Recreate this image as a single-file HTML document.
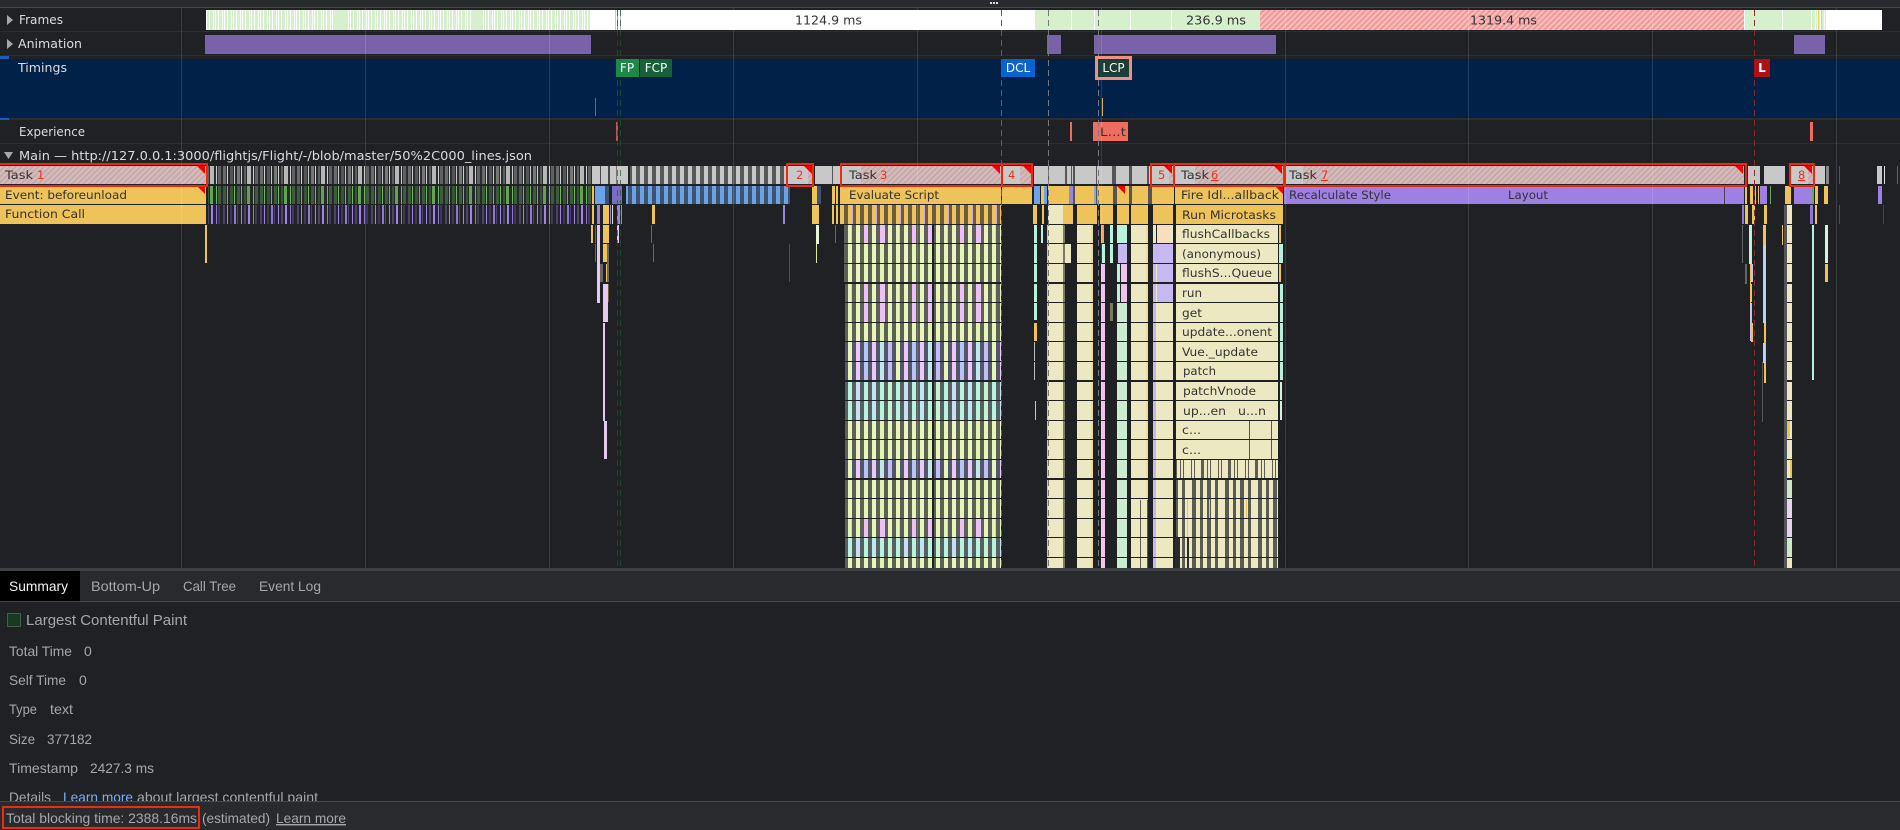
<!DOCTYPE html>
<html><head><meta charset="utf-8"><style>
html,body{margin:0;padding:0;background:#202124;width:1900px;height:830px;overflow:hidden}
svg{position:absolute;left:0;top:0;display:block}
.c{font-family:"DejaVu Sans",sans-serif;font-size:11.5px;fill:#333}
.l{font-family:"DejaVu Sans",sans-serif;font-size:12px;fill:#dcdcdc}
.w{font-family:"DejaVu Sans",sans-serif;font-size:12px;fill:#fff;font-weight:400}
.r{fill:#f0321a}
.b{font-family:"Liberation Sans",sans-serif;font-size:14px;fill:#a6a7a9}
</style></head><body>
<svg width="1900" height="830" viewBox="0 0 1900 830" xmlns="http://www.w3.org/2000/svg">
<defs>
<pattern id="ht" width="4" height="4" patternUnits="userSpaceOnUse" patternTransform="rotate(-45)"><rect width="4" height="4" fill="#d3bcbc"/><rect width="4" height="2" fill="#c9a9a9"/></pattern>
<pattern id="hf" width="4" height="4" patternUnits="userSpaceOnUse" patternTransform="rotate(-45)"><rect width="4" height="4" fill="#f9bcbc"/><rect width="4" height="2" fill="#ef9a9a"/></pattern>
<pattern id="fg" width="9" height="20" patternUnits="userSpaceOnUse"><rect width="9" height="20" fill="#d6efcd"/><rect x="2" width="1" height="20" fill="#fff"/><rect x="6" width="1" height="20" fill="#f4fbf1"/><rect x="8" width="1" height="20" fill="#fff"/></pattern>
<pattern id="t1" width="37" height="19" patternUnits="userSpaceOnUse"><rect width="37" height="19" fill="#2b2c2f"/><rect x="1" width="3" height="19" fill="#6a6b6d"/><rect x="5" width="1" height="19" fill="#d0d0d0"/><rect x="8" width="3" height="19" fill="#555658"/><rect x="12" width="1" height="19" fill="#c8c8c8"/><rect x="15" width="3" height="19" fill="#777"/><rect x="19" width="1" height="19" fill="#d0d0d0"/><rect x="22" width="2" height="19" fill="#5d5e60"/><rect x="25" width="4" height="19" fill="#b8b8b8"/><rect x="31" width="1" height="19" fill="#d0d0d0"/><rect x="33" width="3" height="19" fill="#606163"/></pattern>
<pattern id="t2" width="8" height="19" patternUnits="userSpaceOnUse"><rect width="8" height="19" fill="#57585a"/><rect width="4" height="19" fill="#c8c8c8"/></pattern>
<pattern id="e1" width="37" height="19" patternUnits="userSpaceOnUse"><rect width="37" height="19" fill="#24292a"/><rect x="1" width="3" height="19" fill="#3f5a3e"/><rect x="5" width="1" height="19" fill="#6fb85e"/><rect x="8" width="3" height="19" fill="#3a5238"/><rect x="12" width="1" height="19" fill="#6fb85e"/><rect x="15" width="3" height="19" fill="#3f5a3e"/><rect x="19" width="1" height="19" fill="#6fb85e"/><rect x="22" width="2" height="19" fill="#3a5238"/><rect x="25" width="3" height="19" fill="#63a353"/><rect x="31" width="1" height="19" fill="#6fb85e"/><rect x="33" width="3" height="19" fill="#3f5a3e"/></pattern>
<pattern id="e2" width="8" height="19" patternUnits="userSpaceOnUse"><rect width="8" height="19" fill="#3d5370"/><rect width="4" height="19" fill="#6ca2e6"/></pattern>
<pattern id="f1" width="37" height="19" patternUnits="userSpaceOnUse"><rect width="37" height="19" fill="#232329"/><rect x="1" width="2" height="19" fill="#4a4468"/><rect x="5" width="1" height="19" fill="#9d84e6"/><rect x="8" width="2" height="19" fill="#3e3a55"/><rect x="12" width="2" height="19" fill="#8f77d6"/><rect x="15" width="1" height="19" fill="#4a4468"/><rect x="19" width="1" height="19" fill="#9d84e6"/><rect x="22" width="2" height="19" fill="#4a4468"/><rect x="26" width="2" height="19" fill="#9d84e6"/><rect x="31" width="1" height="19" fill="#8f77d6"/><rect x="33" width="2" height="19" fill="#3e3a55"/></pattern>
<pattern id="y1" width="24" height="19" patternUnits="userSpaceOnUse"><rect width="24" height="19" fill="#6b5c3d"/><rect width="4" height="19" fill="#edc35a"/><rect x="8" width="4" height="19" fill="#edc35a"/><rect x="16" width="4" height="19" fill="#edc35a"/><rect x="12" width="1" height="19" fill="#d8a8d0"/></pattern>
<pattern id="pP" width="48" height="19" patternUnits="userSpaceOnUse"><rect width="48" height="19" fill="#5c6058"/><rect width="4" height="19" fill="#ebc0f7"/><rect x="8" width="4" height="19" fill="#e6f5b5"/><rect x="16" width="5" height="19" fill="#ebc0f7"/><rect x="24" width="4" height="19" fill="#e6f5b5"/><rect x="32" width="4" height="19" fill="#e6f5b5"/><rect x="35" width="1" height="19" fill="#ebc0f7"/><rect x="40" width="4" height="19" fill="#e6f5b5"/></pattern>
<pattern id="pL" width="48" height="19" patternUnits="userSpaceOnUse"><rect width="48" height="19" fill="#5c6156"/><rect width="4" height="19" fill="#e6f5b5"/><rect x="8" width="4" height="19" fill="#e8f6ba"/><rect x="16" width="4" height="19" fill="#e2f3b0"/><rect x="24" width="4" height="19" fill="#e6f5b5"/><rect x="32" width="4" height="19" fill="#e6f5b5"/><rect x="40" width="4" height="19" fill="#ecf2c0"/></pattern>
<pattern id="pM" width="48" height="19" patternUnits="userSpaceOnUse"><rect width="48" height="19" fill="#566060"/><rect width="4" height="19" fill="#b8f4dd"/><rect x="8" width="4" height="19" fill="#bde8f2"/><rect x="16" width="4" height="19" fill="#b8f4dd"/><rect x="24" width="4" height="19" fill="#c6f3d2"/><rect x="32" width="4" height="19" fill="#b8f4dd"/><rect x="40" width="4" height="19" fill="#c9ddf6"/></pattern>
<pattern id="pB" width="48" height="19" patternUnits="userSpaceOnUse"><rect width="48" height="19" fill="#53566a"/><rect width="4" height="19" fill="#b5c6f5"/><rect x="8" width="4" height="19" fill="#ebc8f5"/><rect x="16" width="4" height="19" fill="#bfe8e8"/><rect x="24" width="4" height="19" fill="#c2bdf5"/><rect x="32" width="4" height="19" fill="#e6f5b5"/><rect x="40" width="4" height="19" fill="#ebc8f5"/></pattern>
<pattern id="pS" width="33" height="19" patternUnits="userSpaceOnUse"><rect width="33" height="19" fill="#ece8c2"/><rect x="4" width="4" height="19" fill="#5a5c50"/><rect x="12" width="3" height="19" fill="#5a5c50"/><rect x="19" width="4" height="19" fill="#5a5c50"/><rect x="27" width="3" height="19" fill="#5a5c50"/></pattern>
<pattern id="pS2" width="27" height="19" patternUnits="userSpaceOnUse"><rect width="27" height="19" fill="#ece8c2"/><rect x="3" width="1" height="19" fill="#5d5d50"/><rect x="6" width="1" height="19" fill="#5d5d50"/><rect x="13" width="3" height="19" fill="#5d5d50"/><rect x="19" width="1" height="19" fill="#5d5d50"/><rect x="22" width="1" height="19" fill="#5d5d50"/></pattern>
</defs>

<g shape-rendering="crispEdges">
<!-- top bar -->
<rect width="1900" height="7" fill="#292a2d"/><rect y="7" width="1900" height="1" fill="#47484c"/>
<rect x="990" y="2" width="2" height="2" fill="#ddd"/><rect x="993" y="2" width="2" height="2" fill="#ddd"/><rect x="996" y="2" width="2" height="2" fill="#ddd"/>

<!-- frames -->
<rect x="206" y="10" width="384" height="20" fill="url(#fg)"/>
<rect x="335" y="10" width="10" height="20" fill="#d6efcd"/><rect x="473" y="10" width="10" height="20" fill="#d6efcd"/>
<rect x="590" y="10" width="445" height="20" fill="#fff"/>
<rect x="615" y="10" width="1" height="20" fill="#e8d64a"/><rect x="617" y="10" width="1" height="20" fill="#999"/><rect x="620" y="10" width="1" height="20" fill="#bbb"/>
<rect x="1035" y="10" width="225" height="20" fill="#d6efcd"/>
<rect x="1071" y="10" width="1" height="20" fill="#fff"/><rect x="1094" y="10" width="1" height="20" fill="#fff"/><rect x="1130" y="10" width="1" height="20" fill="#fff"/><rect x="1171" y="10" width="1" height="20" fill="#fff"/>
<rect x="1260" y="10" width="484" height="20" fill="url(#hf)"/><rect x="1744" y="10" width="1" height="20" fill="#fff"/>
<rect x="1745" y="10" width="65" height="20" fill="#d6efcd"/><rect x="1782" y="10" width="1" height="20" fill="#fff"/>
<rect x="1810" y="10" width="16" height="20" fill="url(#fg)"/><rect x="1818" y="10" width="1" height="20" fill="#e8d64a"/><rect x="1821" y="10" width="1" height="20" fill="#e8d64a"/>
<rect x="1826" y="10" width="56" height="20" fill="#fff"/>
<rect y="31" width="1900" height="1" fill="#2c2d30"/>

<!-- animation -->
<rect x="205" y="35" width="386" height="19" fill="#7862a9"/>
<rect x="1047" y="35" width="14" height="19" fill="#7862a9"/>
<rect x="1094" y="35" width="182" height="19" fill="#7862a9"/>
<rect x="1794" y="35" width="31" height="19" fill="#7862a9"/>
<rect y="55" width="1900" height="1" fill="#2c2d30"/>

<!-- timings -->
<rect y="59" width="1900" height="59" fill="#012148"/>
<rect y="56" width="9" height="3" fill="#1a5fb4"/><rect y="118" width="9" height="2" fill="#1a5fb4"/>
<rect x="9" y="118" width="1891" height="2" fill="#2c2d30"/>
<rect x="595" y="98" width="1" height="18" fill="#5c6b80"/><rect x="1102" y="98" width="1" height="18" fill="#d8b24a"/>

<!-- experience -->
<rect x="616" y="122" width="2" height="19" fill="#bb5a50"/>
<rect x="1070" y="122" width="2" height="19" fill="#ef6c60"/>
<rect x="1093" y="122" width="35" height="19" fill="#ef6c60"/>
<rect x="1810" y="122" width="3" height="19" fill="#ef6c60"/>
<rect y="143" width="1900" height="1" fill="#2c2d30"/>

<!-- task row -->
<rect x="0" y="166" width="206" height="18" fill="url(#ht)"/>
<rect x="208" y="166" width="384" height="18" fill="url(#t1)"/>
<rect x="592" y="166" width="36" height="18" fill="#c8c8c8"/><rect x="600" y="166" width="1" height="18" fill="#47484b"/><rect x="608" y="166" width="2" height="18" fill="#47484b"/><rect x="616" y="166" width="1" height="18" fill="#777"/>
<rect x="630" y="166" width="156" height="18" fill="url(#t2)"/>
<rect x="787" y="166" width="26" height="18" fill="#c8c8c8"/><rect x="808" y="166" width="5" height="18" fill="url(#ht)"/>
<rect x="815" y="166" width="25" height="18" fill="#c8c8c8"/><rect x="832" y="166" width="1" height="18" fill="#555"/>
<rect x="840" y="166" width="161" height="18" fill="url(#ht)"/><rect x="840" y="166" width="21" height="18" fill="#c8c8c8"/>
<rect x="1002" y="166" width="30" height="18" fill="url(#ht)"/><rect x="1002" y="166" width="18" height="18" fill="#c8c8c8"/>
<rect x="1034" y="166" width="116" height="18" fill="#c8c8c8"/>
<path d="M1048 166h1v18h-1zM1065 166h2v18h-2zM1071 166h1v18h-1zM1073 166h2v18h-2zM1096 166h1v18h-1zM1112 166h4v18h-4zM1129 166h3v18h-3zM1147 166h2v18h-2z" fill="#555"/>
<rect x="1151" y="166" width="22" height="18" fill="#c8c8c8"/><rect x="1169" y="166" width="4" height="18" fill="url(#ht)"/>
<rect x="1175" y="166" width="108" height="18" fill="url(#ht)"/><rect x="1175" y="166" width="20" height="18" fill="#c8c8c8"/>
<rect x="1286" y="166" width="458" height="18" fill="url(#ht)"/><rect x="1286" y="166" width="17" height="18" fill="#c8c8c8"/>
<rect x="1748" y="166" width="12" height="18" fill="#c8c8c8"/><rect x="1764" y="166" width="21" height="18" fill="#c8c8c8"/>
<rect x="1791" y="166" width="22" height="18" fill="#c8c8c8"/><rect x="1808" y="166" width="5" height="18" fill="url(#ht)"/>
<rect x="1815" y="166" width="10" height="18" fill="#c8c8c8"/><rect x="1826" y="166" width="3" height="18" fill="#888"/>
<rect x="1839" y="166" width="1" height="18" fill="#555"/><rect x="1877" y="166" width="5" height="18" fill="#c8c8c8"/><rect x="1884" y="166" width="1" height="18" fill="#ddd"/><rect x="1897" y="166" width="1" height="18" fill="#666"/>

<!-- event row -->
<rect x="0" y="186" width="206" height="18" fill="#edc35a"/>
<rect x="208" y="186" width="384" height="18" fill="url(#e1)"/>
<rect x="592" y="186" width="2" height="18" fill="#edc35a"/><rect x="595" y="186" width="14" height="18" fill="#6ca2e6"/><rect x="605" y="186" width="4" height="18" fill="#3d5370"/>
<rect x="612" y="186" width="10" height="18" fill="#7a6cc0"/>
<rect x="626" y="186" width="164" height="18" fill="url(#e2)"/>
<rect x="812" y="186" width="5" height="18" fill="#edc35a"/><rect x="817" y="186" width="4" height="18" fill="#3d5370"/><rect x="832" y="186" width="3" height="18" fill="#edc35a"/><rect x="836" y="186" width="2" height="18" fill="#edc35a"/>
<rect x="840" y="186" width="161" height="18" fill="#edc35a"/><rect x="1002" y="186" width="30" height="18" fill="#edc35a"/>
<rect x="1034" y="186" width="6" height="18" fill="#6ca2e6"/><rect x="1041" y="186" width="3" height="18" fill="#edc35a"/><rect x="1044" y="186" width="3" height="18" fill="#6ca2e6"/>
<rect x="1048" y="186" width="126" height="18" fill="#edc35a"/><rect x="1069" y="186" width="4" height="18" fill="#9a86d8"/><rect x="1094" y="186" width="4" height="18" fill="#8fa8c8"/>
<rect x="1175" y="186" width="108" height="18" fill="#edc35a"/>
<rect x="1284" y="186" width="460" height="18" fill="#9d80e3"/><rect x="1724" y="186" width="1" height="18" fill="#4a4060"/>
<path d="M1745 186h2v18h-2zM1750 186h3v18h-3zM1755 186h1v18h-1zM1758 186h1v18h-1zM1785 186h2v18h-2zM1787 186h4v18h-4zM1815 186h3v18h-3zM1824 186h4v18h-4z" fill="#edc35a"/>
<path d="M1760 186h7v18h-7zM1794 186h18v18h-18zM1878 186h4v18h-4z" fill="#9d80e3"/>
<path d="M1770 186h1v18h-1zM1812 186h2v18h-2z" fill="#6aa84f"/>

<!-- function row -->
<rect x="0" y="205" width="206" height="19" fill="#edc35a"/>
<rect x="208" y="205" width="384" height="19" fill="url(#f1)"/>
<path d="M592 205h2v19h-2zM603 205h6v19h-6zM652 205h3v19h-3zM812 205h7v19h-7zM832 205h2v19h-2zM836 205h2v19h-2z" fill="#edc35a"/>
<path d="M597 205h3v19h-3zM610 205h1v19h-1zM617 205h3v19h-3zM621 205h1v19h-1zM783 205h2v19h-2z" fill="#9a86d8"/>
<rect x="612" y="205" width="1" height="19" fill="#ddd"/>
<rect x="840" y="205" width="161" height="19" fill="url(#y1)"/>
<path d="M1033 205h4v19h-4zM1042 205h2v19h-2zM1063 205h34v19h-34zM1100 205h13v19h-13zM1117 205h12v19h-12zM1131 205h17v19h-17zM1153 205h20v19h-20z" fill="#edc35a"/>
<rect x="1048" y="205" width="15" height="19" fill="#ece8c2"/>
<rect x="1176" y="205" width="107" height="19" fill="#edc35a"/>
<path d="M1745 205h3v19h-3zM1752 205h3v19h-3zM1764 205h3v19h-3zM1785 205h3v19h-3zM1815 205h2v19h-2z" fill="#edc35a"/>
<path d="M1742 205h2v19h-2zM1810 205h3v19h-3z" fill="#8f77d6"/><rect x="1788" y="205" width="3" height="19" fill="#ece8c2"/>

<!-- sparse deep left -->
<path d="M205 225h2v38h-2zM591 225h2v18h-2zM603 225h6v18h-6zM603 244h4v18h-4zM606 264h2v18h-2zM810 264h0z" fill="#edc35a"/>
<path d="M597 225h3v78h-3zM617 225h2v18h-2zM603 284h5v38h-5zM603 323h2v98h-2zM604 421h3v38h-3z" fill="#e5c8f0"/>
<path d="M600 264h3v18h-3zM607 244h2v38h-2zM651 225h1v18h-1zM595 244h1v18h-1zM595 225h1v18h-1zM653 244h1v18h-1zM835 225h1v18h-1z" fill="#666"/>
<path d="M816 225h3v19h-3z" fill="#e8f4d8"/><path d="M816 244h1v19h-1z" fill="#dfe89a"/>
<rect x="608" y="284" width="1" height="18" fill="#6b5a30"/>
<rect x="789" y="244" width="1" height="38" fill="#5a5030"/>

<!-- main left stripes -->
<rect x="844" y="225" width="157" height="19" fill="url(#pP)"/>
<rect x="844" y="244" width="157" height="19" fill="url(#pL)"/>
<rect x="844" y="264" width="157" height="19" fill="url(#pL)"/>
<rect x="845" y="284" width="156" height="19" fill="url(#pP)"/>
<rect x="845" y="303" width="156" height="19" fill="url(#pP)"/>
<rect x="845" y="323" width="156" height="19" fill="url(#pL)"/>
<rect x="845" y="342" width="156" height="19" fill="url(#pB)"/>
<rect x="845" y="362" width="156" height="19" fill="url(#pB)"/>
<rect x="845" y="382" width="156" height="19" fill="url(#pM)"/>
<rect x="845" y="401" width="156" height="19" fill="url(#pM)"/>
<rect x="845" y="421" width="156" height="19" fill="url(#pL)"/>
<rect x="845" y="440" width="156" height="19" fill="url(#pL)"/>
<rect x="845" y="460" width="156" height="19" fill="url(#pB)"/>
<rect x="845" y="480" width="156" height="19" fill="url(#pL)"/>
<rect x="845" y="499" width="156" height="19" fill="url(#pL)"/>
<rect x="845" y="519" width="156" height="19" fill="url(#pP)"/>
<rect x="845" y="538" width="156" height="19" fill="url(#pM)"/>
<rect x="845" y="558" width="156" height="10" fill="url(#pL)"/>
<rect x="932" y="225" width="2" height="343" fill="#202124"/>

<!-- middle columns -->
<path d="M1034 225h3v95h-3zM1041 225h2v18h-2z" fill="#b9f0dc"/>
<rect x="1034" y="322" width="3" height="20" fill="#edc35a"/>
<rect x="1034" y="342" width="1" height="38" fill="#bbb"/><rect x="1035" y="401" width="1" height="19" fill="#edc35a"/>
<path d="M1047 225h1v343h-1z" fill="#b4c8f0"/>
<path d="M1048 225h15v343h-15zM1077 225h16v343h-16zM1131 225h17v343h-17zM1153 264h20v304h-20zM1065 244h6v19h-6z" fill="#ece8c2"/>
<path d="M1101 225h3v18h-3z" fill="#f0a860"/>
<path d="M1102 244h3v19h-3zM1117 225h10v19h-10zM1110 225h3v38h-3zM1115 264h5v39h-5z" fill="#b9f3dc"/>
<path d="M1101 264h4v190h-4zM1121 264h6v39h-6z" fill="#eec4ee"/>
<path d="M1117 303h10v265h-10z" fill="#cbecd0"/>
<path d="M1118 244h9v20h-9zM1153 244h20v20h-20zM1153 264h3v304h-3z" fill="#c6b9f2"/>
<path d="M1157 225h12v19h-12z" fill="#f6dfc0"/><path d="M1169 225h4v19h-4z" fill="#ece8c2"/><path d="M1153 225h3v19h-3z" fill="#ece8c2"/>
<path d="M1101 454h4v114h-4z" fill="#f2c6e8"/>
<path d="M1157 264h16v38h-16z" fill="#c6b9f2"/>
<path d="M1157 302h16v266h-16z" fill="#ece8c2"/>
<path d="M1063 225h2v343h-2zM1110 303h3v18h-3z" fill="#7a7a60"/>
<path d="M1146 225h2v343h-2zM1091 225h2v343h-2z" fill="#edc35a" opacity=".35"/>
<path d="M1138 500h10v68h-10z" fill="url(#pS2)"/>
<path d="M1105 225h5v343h-5zM1127 225h4v343h-4zM1148 205h5v363h-5zM1113 205h4v363h-4zM1073 205h4v363h-4zM1093 225h8v343h-8z" fill="#202124"/>
<path d="M1148 186h4v18h-4zM1113 186h4v18h-4zM1129 186h3v18h-3zM1073 186h2v18h-2zM1096 186h1v18h-1z" fill="#555"/>
<path d="M1037 225h4v343h-4zM1004 205h28v363h-28z" fill="#202124"/>

<!-- main stack -->
<rect x="1176" y="225" width="102" height="19" fill="#ece8c2"/><rect x="1279" y="225" width="2" height="19" fill="#edc35a"/>
<rect x="1176" y="244" width="102" height="19" fill="#ece8c2"/><rect x="1279" y="244" width="4" height="19" fill="#b9f0dc"/>
<rect x="1176" y="264" width="102" height="19" fill="#ece8c2"/><rect x="1279" y="264" width="2" height="19" fill="#edc35a"/>
<rect x="1176" y="284" width="102" height="96" fill="#ece8c2"/><rect x="1280" y="284" width="3" height="96" fill="#b9f0dc"/>
<rect x="1176" y="382" width="102" height="77" fill="#ece8c2"/>
<rect x="1249" y="421" width="1" height="38" fill="#555"/><rect x="1271" y="421" width="1" height="38" fill="#555"/>
<rect x="1176" y="460" width="102" height="19" fill="url(#pS2)"/>
<rect x="1176" y="480" width="102" height="88" fill="url(#pS)"/>
<path d="M1187 499h1v38h-1zM1209 499h1v19h-1zM1246 499h1v19h-1z" fill="#edc35a"/>
<rect x="1175" y="538" width="5" height="30" fill="#2a2b2e"/><rect x="1187" y="538" width="2" height="30" fill="#2a2b2e"/>
<rect x="1280" y="382" width="2" height="38" fill="#d5f0e0"/>

<!-- row gaps -->
<path d="M832 224h452v1H832zM832 243h452v1H832zM832 263h452v1H832zM832 282h452v2H832zM832 302h452v1H832zM832 322h452v1H832zM832 341h452v1H832zM832 361h452v1H832zM832 380h452v2H832zM832 400h452v1H832zM832 420h452v1H832zM832 439h452v1H832zM832 459h452v1H832zM832 478h452v2H832zM832 498h452v1H832zM832 518h452v1H832zM832 537h452v1H832zM832 557h452v1H832z" fill="#1f2023"/>

<!-- sparse deep right -->
<path d="M1742 225h1v38h-1zM1745 264h2v20h-2z" fill="#666"/>
<path d="M1749 225h3v39h-3z" fill="#b9f0dc"/>
<path d="M1750 264h3v18h-3zM1750 284h2v18h-2zM1750 303h2v38h-2z" fill="#c9c4e6"/><path d="M1750 264h1v39h-1zM1751 323h2v19h-2z" fill="#edc35a"/>
<path d="M1763 225h3v20h-3zM1764 323h2v60h-2z" fill="#edc35a"/><path d="M1763 245h3v78h-3zM1763 343h2v20h-2z" fill="#bcd0f0"/>
<rect x="1782" y="225" width="1" height="20" fill="#edc35a"/><rect x="1762" y="362" width="1" height="60" fill="#555"/>
<rect x="1784" y="205" width="3" height="363" fill="#55565a"/><rect x="1787" y="205" width="5" height="363" fill="#ece8c2"/>
<path d="M1787 420h3v18h-3zM1790 460h2v20h-2z" fill="#edc35a"/><path d="M1787 480h5v18h-5zM1787 538h5v20h-5z" fill="#cfe8c8"/><path d="M1787 500h5v38h-5z" fill="#e6d6ec"/>
<path d="M1787 224h5v1h-5zM1787 243h5v1h-5zM1787 263h5v1h-5zM1787 282h5v2h-5zM1787 302h5v1h-5zM1787 322h5v1h-5zM1787 341h5v1h-5zM1787 361h5v1h-5zM1787 380h5v2h-5zM1787 400h5v1h-5zM1787 420h5v1h-5zM1787 439h5v1h-5zM1787 459h5v1h-5zM1787 478h5v2h-5zM1787 498h5v1h-5zM1787 518h5v1h-5zM1787 537h5v1h-5zM1787 557h5v1h-5z" fill="#202124"/>
<path d="M1812 225h2v155h-2z" fill="#b9f0dc"/>
<path d="M1825 225h3v38h-3z" fill="#d5f5e0"/><path d="M1825 264h3v18h-3z" fill="#edc35a"/>
<rect x="1839" y="205" width="1" height="19" fill="#555040"/><rect x="1883" y="205" width="1" height="19" fill="#444"/>

<!-- red triangles -->
<path d="M205 166v8l-8-8zM205 186v8l-8-8zM812 166v8l-8-8zM1000 166v8l-8-8zM1031 166v8l-8-8zM1125 186v8l-8-8zM1172 166v8l-8-8zM1282 166v8l-8-8zM1283 186v8l-8-8zM1743 166v8l-8-8zM1812 166v8l-8-8z" fill="#f50000" shape-rendering="auto"/>

<!-- grid -->
<path d="M181 8h1v560h-1zM365 8h1v560h-1zM549 8h1v560h-1zM733 8h1v560h-1zM917 8h1v560h-1zM1101 8h1v560h-1zM1285 8h1v560h-1zM1468 8h1v560h-1zM1652 8h1v560h-1zM1836 8h1v560h-1z" fill="#fff" fill-opacity=".13"/>
</g>

<!-- dashed markers -->
<g stroke-dasharray="6 4" fill="none" stroke-width="1" shape-rendering="crispEdges">
<path d="M617.5 10V568M620.5 10V568" stroke="#1d5a35" stroke-opacity=".7"/>
<path d="M1001.5 10V568" stroke="#2668b8"/>
<path d="M1048.5 10V568" stroke="#777"/>
<path d="M1098.5 10V568" stroke="#778"/>
<path d="M1754.5 10V568" stroke="#8a2a2a"/>
</g>

<!-- markers on timings -->
<g shape-rendering="crispEdges">
<rect x="616" y="59" width="23" height="18" fill="#1c8a47"/>
<rect x="640" y="59" width="32" height="18" fill="#16613a"/>
<rect x="1001" y="59" width="34" height="18" fill="#0b63ce"/>
<rect x="1095" y="56" width="37" height="24" fill="#ef8f85"/><rect x="1098" y="59" width="31" height="18" fill="#1b3e36"/>
<rect x="1754" y="59" width="16" height="18" fill="#ad1116"/>
</g>

<!-- red boxes -->
<g fill="none" stroke="#f0260f" stroke-width="2" shape-rendering="crispEdges">
<rect x="-2" y="164" width="209" height="22"/>
<rect x="787" y="164" width="26" height="22"/>
<rect x="841" y="164" width="161" height="22"/>
<rect x="1002" y="164" width="30" height="22"/>
<rect x="1151" y="164" width="23" height="22"/>
<rect x="1174" y="164" width="110" height="22"/>
<rect x="1285" y="164" width="461" height="22"/>
<rect x="1790" y="164" width="24" height="22"/>
</g>

<!-- track labels -->
<path d="M7 15l6 5-6 5zM7 39l6 5-6 5z" fill="#a8a8a8"/>
<path d="M4 152h9l-4.500 7z" fill="#a8a8a8"/>
<text class="l" x="19" y="24" textLength="44" lengthAdjust="spacingAndGlyphs">Frames</text>
<text class="l" x="18" y="48" textLength="64" lengthAdjust="spacingAndGlyphs">Animation</text>
<text class="l" x="18" y="72" textLength="49" lengthAdjust="spacingAndGlyphs">Timings</text>
<text class="l" x="19" y="136" textLength="66" lengthAdjust="spacingAndGlyphs">Experience</text>
<text class="l" x="19" y="160" textLength="513" lengthAdjust="spacingAndGlyphs">Main — http://127.0.0.1:3000/flightjs/Flight/-/blob/master/50%2C000_lines.json</text>

<!-- frame labels -->
<text class="c" x="795" y="24.500" textLength="67" lengthAdjust="spacingAndGlyphs" style="font-size:12.5px">1124.9 ms</text>
<text class="c" x="1186" y="24.500" textLength="60" lengthAdjust="spacingAndGlyphs" style="font-size:12.5px">236.9 ms</text>
<text class="c" x="1470" y="24.500" textLength="67" lengthAdjust="spacingAndGlyphs" style="font-size:12.5px">1319.4 ms</text>

<!-- timing labels -->
<text class="w" x="627" y="72" text-anchor="middle">FP</text>
<text class="w" x="656" y="72" text-anchor="middle">FCP</text>
<text class="w" x="1018" y="72" text-anchor="middle">DCL</text>
<text class="w" x="1113.500" y="72" text-anchor="middle">LCP</text>
<text class="w" x="1762" y="72" text-anchor="middle" style="font-weight:700">L</text>
<text class="c" x="1100" y="136" textLength="26" lengthAdjust="spacingAndGlyphs">L...t</text>

<!-- flame labels -->
<text class="c" x="5" y="179" textLength="28" lengthAdjust="spacingAndGlyphs">Task</text><text class="c r" x="37" y="179">1</text>
<text class="c" x="5" y="199" textLength="122" lengthAdjust="spacingAndGlyphs">Event: beforeunload</text>
<text class="c" x="5" y="218" textLength="80" lengthAdjust="spacingAndGlyphs">Function Call</text>
<text class="c r" x="796" y="179">2</text>
<text class="c" x="849" y="179" textLength="28" lengthAdjust="spacingAndGlyphs">Task</text><text class="c r" x="880" y="179">3</text>
<text class="c" x="849" y="199" textLength="90" lengthAdjust="spacingAndGlyphs">Evaluate Script</text>
<text class="c r" x="1008" y="179">4</text>
<text class="c r" x="1158" y="179">5</text>
<text class="c" x="1181" y="179" textLength="28" lengthAdjust="spacingAndGlyphs">Task</text><text class="c r" x="1211" y="179" text-decoration="underline">6</text>
<text class="c" x="1289" y="179" textLength="28" lengthAdjust="spacingAndGlyphs">Task</text><text class="c r" x="1321" y="179" text-decoration="underline">7</text>
<text class="c r" x="1798" y="179" text-decoration="underline">8</text>
<text class="c" x="1181" y="199" textLength="98" lengthAdjust="spacingAndGlyphs">Fire Idl...allback</text>
<text class="c" x="1289" y="199" textLength="102" lengthAdjust="spacingAndGlyphs">Recalculate Style</text>
<text class="c" x="1508" y="199" textLength="40" lengthAdjust="spacingAndGlyphs">Layout</text>
<text class="c" x="1182" y="219" textLength="94" lengthAdjust="spacingAndGlyphs">Run Microtasks</text>
<text class="c" x="1182" y="238" textLength="88" lengthAdjust="spacingAndGlyphs">flushCallbacks</text>
<text class="c" x="1182" y="258" textLength="79" lengthAdjust="spacingAndGlyphs">(anonymous)</text>
<text class="c" x="1182" y="277" textLength="90" lengthAdjust="spacingAndGlyphs">flushS...Queue</text>
<text class="c" x="1182" y="297" textLength="20" lengthAdjust="spacingAndGlyphs">run</text>
<text class="c" x="1182" y="317" textLength="20" lengthAdjust="spacingAndGlyphs">get</text>
<text class="c" x="1182" y="336" textLength="90" lengthAdjust="spacingAndGlyphs">update...onent</text>
<text class="c" x="1182" y="356" textLength="76" lengthAdjust="spacingAndGlyphs">Vue._update</text>
<text class="c" x="1183" y="375" textLength="33" lengthAdjust="spacingAndGlyphs">patch</text>
<text class="c" x="1183" y="395" textLength="73" lengthAdjust="spacingAndGlyphs">patchVnode</text>
<text class="c" x="1183" y="415" textLength="43" lengthAdjust="spacingAndGlyphs">up...en</text>
<text class="c" x="1238" y="415" textLength="28" lengthAdjust="spacingAndGlyphs">u...n</text>
<text class="c" x="1182" y="434" textLength="19" lengthAdjust="spacingAndGlyphs">c...</text>
<text class="c" x="1182" y="454" textLength="19" lengthAdjust="spacingAndGlyphs">c...</text>

<!-- splitter + bottom panel -->
<g shape-rendering="crispEdges">
<rect y="568" width="1900" height="3" fill="#3f4044"/>
<rect y="571" width="1900" height="30" fill="#292a2d"/>
<rect y="571" width="80" height="30" fill="#000"/>
<rect y="601" width="1900" height="1" fill="#47484c"/>
<rect y="602" width="1900" height="200" fill="#202124"/>
<rect x="7.500" y="613.500" width="13" height="13" fill="#163a22" stroke="#4a5a50"/>
</g>
<g style="filter:blur(.35px)">
<text class="b" x="9" y="591" textLength="59" lengthAdjust="spacingAndGlyphs" style="fill:#f2f2f2">Summary</text>
<text class="b" x="91" y="591" textLength="69" lengthAdjust="spacingAndGlyphs">Bottom-Up</text>
<text class="b" x="183" y="591" textLength="53" lengthAdjust="spacingAndGlyphs">Call Tree</text>
<text class="b" x="259" y="591" textLength="62" lengthAdjust="spacingAndGlyphs">Event Log</text>
<text class="b" x="26" y="625" textLength="161" lengthAdjust="spacingAndGlyphs" style="font-size:15px">Largest Contentful Paint</text>
<text class="b" x="9" y="656" textLength="63" lengthAdjust="spacingAndGlyphs">Total Time</text><text class="b" x="84" y="656">0</text>
<text class="b" x="9" y="685" textLength="57" lengthAdjust="spacingAndGlyphs">Self Time</text><text class="b" x="79" y="685">0</text>
<text class="b" x="9" y="714" textLength="28" lengthAdjust="spacingAndGlyphs">Type</text><text class="b" x="50" y="714" textLength="23" lengthAdjust="spacingAndGlyphs">text</text>
<text class="b" x="9" y="744" textLength="26" lengthAdjust="spacingAndGlyphs">Size</text><text class="b" x="47" y="744" textLength="45" lengthAdjust="spacingAndGlyphs">377182</text>
<text class="b" x="9" y="773" textLength="69" lengthAdjust="spacingAndGlyphs">Timestamp</text><text class="b" x="90" y="773" textLength="64" lengthAdjust="spacingAndGlyphs">2427.3 ms</text>
<text class="b" x="9" y="802" textLength="42" lengthAdjust="spacingAndGlyphs">Details</text><text class="b" x="63" y="802" textLength="70" lengthAdjust="spacingAndGlyphs" style="fill:#7cacf8">Learn more</text><text class="b" x="137" y="802" textLength="181" lengthAdjust="spacingAndGlyphs">about largest contentful paint</text>
</g>
<g shape-rendering="crispEdges">
<rect y="801" width="1900" height="29" fill="#292a2d"/>
<rect y="801" width="1900" height="1" fill="#47484c"/>
<rect x="3" y="807" width="196" height="21" fill="none" stroke="#ee2a12" stroke-width="2"/>
</g>
<g style="filter:blur(.35px)">
<text class="b" x="6" y="823" textLength="191" lengthAdjust="spacingAndGlyphs">Total blocking time: 2388.16ms</text>
<text class="b" x="202" y="823" textLength="68" lengthAdjust="spacingAndGlyphs">(estimated)</text>
<text class="b" x="276" y="823" textLength="70" lengthAdjust="spacingAndGlyphs" text-decoration="underline">Learn more</text>
</g>
</svg>
</body></html>
